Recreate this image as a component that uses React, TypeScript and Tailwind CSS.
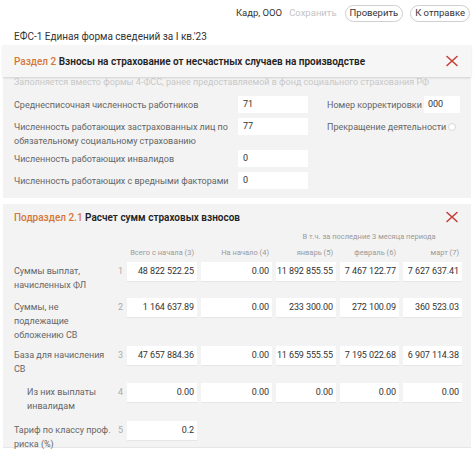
import React from "react";

const XIcon = () => (
  <svg width="14" height="12" viewBox="0 0 14 12" className="shrink-0">
    <path d="M2 1.5 L12 10.5 M12 1.5 L2 10.5" stroke="#c4413a" strokeWidth="1.6" strokeLinecap="round" />
  </svg>
);

const topRows = [
  { label: ["Среднесписочная численность работников"], value: "71" },
  { label: ["Численность работающих застрахованных лиц по", "обязательному социальному страхованию"], value: "77" },
  { label: ["Численность работающих инвалидов"], value: "0" },
  { label: ["Численность работающих с вредными факторами"], value: "0" },
];

const colWidths = ["w-[70px]", "w-[71px]", "w-[60px]", "w-[59px]", "w-[59px]"];

const tableRows = [
  { label: ["Суммы выплат,", "начисленных ФЛ"], n: "1", values: ["48 822 522.25", "0.00", "11 892 855.55", "7 467 122.77", "7 627 637.41"], h: "h-[36px]", indent: false },
  { label: ["Суммы, не", "подлежащие", "обложению СВ"], n: "2", values: ["1 164 637.89", "0.00", "233 300.00", "272 100.09", "360 523.03"], h: "h-[48px]", indent: false },
  { label: ["База для начисления", "СВ"], n: "3", values: ["47 657 884.36", "0.00", "11 659 555.55", "7 195 022.68", "6 907 114.38"], h: "h-[37px]", indent: false },
  { label: ["Из них выплаты", "инвалидам"], n: "4", values: ["0.00", "0.00", "0.00", "0.00", "0.00"], h: "h-[38px]", indent: true },
  { label: ["Тариф по классу проф.", "риска (%)"], n: "5", values: ["0.2"], h: "h-[30px]", indent: false },
];

const App = () => {
  return (
    <div className="w-[474px] h-[452px] overflow-hidden bg-white text-[#333]" style={{ fontFamily: "Roboto, 'Liberation Sans', sans-serif" }}>
      {/* top bar */}
      <div className="h-[27px] flex items-center justify-end pr-[4px] text-[9.5px]">
        <span className="text-[#333] mr-[7px]">Кадр, ООО</span>
        <span className="text-[#c4c4c4] mr-[8px]">Сохранить</span>
        <span className="h-[17px] px-[4px] flex items-center rounded-full border border-[#cfcfcf] mr-[7px]">Проверить</span>
        <span className="h-[17px] px-[4px] flex items-center rounded-full border border-[#cfcfcf]">К отправке</span>
      </div>

      <div className="h-[18px] pl-[14px] flex items-center text-[10px] text-[#333]">
        ЕФС-1 Единая форма сведений за I кв.'23
      </div>

      {/* section 2 */}
      <div className="mx-[3px] bg-[#f3f3f3]">
        <div className="h-[32px] bg-[#f6f6f6] flex items-center justify-between pl-[11px] pr-[12px] shadow-[0_1px_2px_rgba(0,0,0,0.15)]">
          <span className="text-[10px] font-semibold text-[#222]">
            <span className="text-[#d4763b] font-medium">Раздел 2</span> Взносы на страхование от несчастных случаев на производстве
          </span>
          <XIcon />
        </div>
        <div className="pl-[11px] h-[12px] flex items-center text-[9px] text-[#c8c8c8] whitespace-nowrap">
          Заполняется вместо формы 4-ФСС, ранее предоставляемой в фонд социального страхования РФ
        </div>
        <div className="pl-[11px] pt-[7px] pb-[4px] flex flex-col">
          {topRows.map((r, i) => (
            <div key={i} className={`flex items-start ${i === 1 ? "h-[32px]" : "h-[22px]"}`}>
              <div className="w-[224px] pt-[2px] text-[9px] leading-[14px] text-[#666] whitespace-nowrap">
                {r.label.map((l, j) => (
                  <div key={j}>{l}</div>
                ))}
              </div>
              <div className="w-[70px] h-[17px] bg-white flex items-center pl-[5px] text-[9px] text-[#333]">{r.value}</div>
              {i === 0 && (
                <div className="flex items-start ml-[19px]">
                  <div className="w-[97px] pt-[2px] text-[9px] leading-[14px] text-[#666] whitespace-nowrap">Номер корректировки</div>
                  <div className="w-[36px] h-[17px] bg-white flex items-center pl-[4px] text-[9px] text-[#333]">000</div>
                </div>
              )}
              {i === 1 && (
                <div className="flex items-center ml-[19px] pt-[2px]">
                  <div className="text-[9px] leading-[14px] text-[#666] whitespace-nowrap">Прекращение деятельности</div>
                  <span className="ml-[2px] w-[8px] h-[8px] rounded-full border border-[#d8d8d8] bg-white" />
                </div>
              )}
            </div>
          ))}
        </div>
      </div>

      {/* subsection 2.1 */}
      <div className="mt-[6px] mx-[3px] bg-[#f3f3f3] h-[244px] border-b border-[#e6e6e6]">
        <div className="h-[26px] flex items-center justify-between pl-[11px] pr-[12px]">
          <span className="text-[10px] font-semibold text-[#222]">
            <span className="text-[#d4763b] font-medium">Подраздел 2.1</span> Расчет сумм страховых взносов
          </span>
          <XIcon />
        </div>
        <div className="pl-[11px]">
          <div className="flex h-[14px] items-center text-[7.5px] text-[#9a9a9a] whitespace-nowrap">
            <div className="w-[262px]" />
            <div className="w-[186px] text-center">В т.ч. за последние 3 месяца периода</div>
          </div>
          <div className="flex gap-[4px] h-[18px] items-center text-[7.5px] text-[#9a9a9a] whitespace-nowrap">
            <div className="w-[100px]" />
            <div className="w-[5px]" />
            {["Всего с начала (3)", "На начало (4)", "январь (5)", "февраль (6)", "март (7)"].map((h, i) => (
              <div key={i} className={`${colWidths[i]} text-right pr-[3px]`}>{h}</div>
            ))}
          </div>
          {tableRows.map((r, i) => (
            <div key={i} className={`flex gap-[4px] items-start ${r.h}`}>
              <div className={`w-[100px] pt-[2px] text-[9px] leading-[14px] text-[#666] whitespace-nowrap ${r.indent ? "pl-[13px]" : ""}`}>
                {r.label.map((l, j) => (
                  <div key={j}>{l}</div>
                ))}
              </div>
              <div className="w-[5px] pt-[2px] text-[9px] leading-[14px] text-[#aaa]">{r.n}</div>
              {r.values.map((v, j) => (
                <div key={j} className={`${colWidths[j]} h-[19px] bg-white flex items-center justify-end pr-[3px] text-[9px] tracking-[-0.1px] text-[#333] whitespace-nowrap shadow-[0_1px_0_rgba(0,0,0,0.05)]`}>
                  {v}
                </div>
              ))}
            </div>
          ))}
        </div>
      </div>
    </div>
  );
};

export default App;
